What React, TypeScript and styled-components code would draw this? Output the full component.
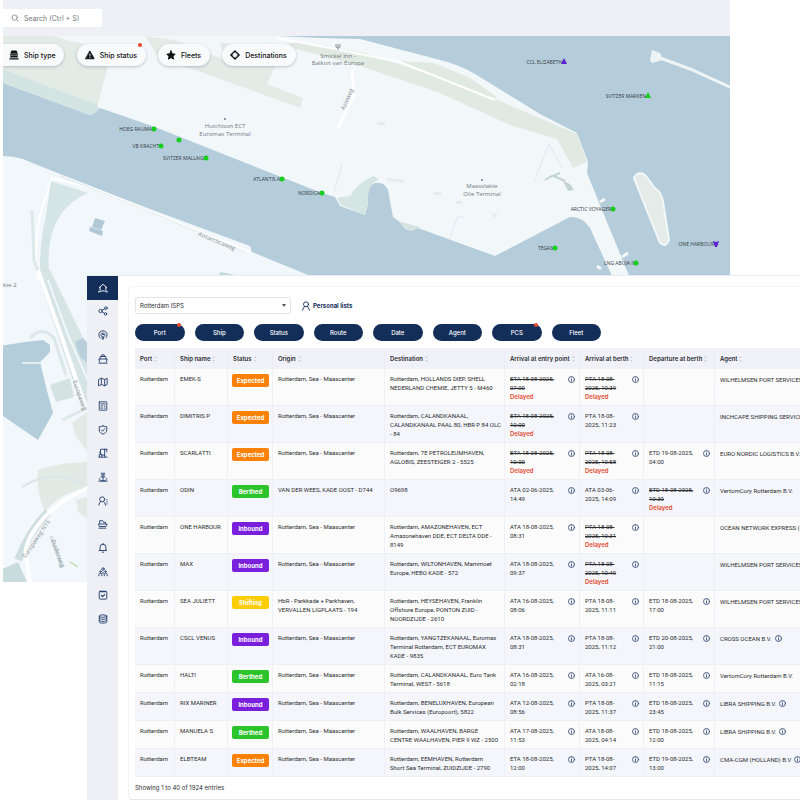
import React from "react";
import styled, { createGlobalStyle, css } from "styled-components";

const NAVY = "#132e59";

const GlobalStyle = createGlobalStyle`
  *, *::before, *::after { box-sizing: border-box; }
  body { margin: 0; background: #fff; font-family: Inter, "Open Sans", sans-serif; font-size: 6px; color: #2c2d30; }
  button, input, select { font: inherit; color: inherit; }
`;

const Page = styled.div`
  display: grid;
  grid-template-columns: minmax(0, 1fr);
  align-items: start;
  min-height: 100vh;
  overflow: hidden;
`;

/* ---------- map window ---------- */

const MapWindow = styled.section`
  grid-area: 1 / 1;
  margin: 0 70px 0 3px;
`;

const TopBar = styled.header`
  display: flex;
  align-items: center;
  height: 36px;
  background: #eef0f6;
`;

const SearchBox = styled.label`
  display: flex;
  align-items: center;
  gap: 5px;
  width: 99px;
  height: 18px;
  padding-left: 8px;
  background: #fff;
  border-radius: 0 2px 2px 0;
  color: #74767c;
`;

const SearchInput = styled.input`
  width: 75px;
  padding: 0;
  border: 0;
  outline: 0;
  background: none;
  font-size: 7px;
  &::placeholder { color: #74767c; opacity: 1; }
`;

const MapBody = styled.div`
  display: grid;
  grid-template-columns: minmax(0, 1fr);
  height: 546px;
  overflow: hidden;
`;

const MapDrawing = styled.svg`
  grid-area: 1 / 1;
  width: 100%;
  height: 546px;
  display: block;
  font-family: "Open Sans", sans-serif;
`;

const ChipBar = styled.div`
  grid-area: 1 / 1;
  z-index: 1;
  align-self: start;
  display: flex;
  gap: 12px;
  padding-top: 8px;
`;

const Dot = styled.i`
  position: absolute;
  top: -1px;
  right: 4px;
  width: 4px;
  height: 4px;
  border-radius: 50%;
  background: #e8482c;
`;

const Chip = styled.button<{ $first?: boolean }>`
  position: relative;
  display: flex;
  align-items: center;
  gap: 5px;
  height: 22px;
  padding: 0 9px 0 8px;
  border: 0;
  border-radius: 11px;
  background: #f8fafc;
  box-shadow: 0 1px 3px rgba(60, 80, 110, 0.3);
  color: #111;
  font-size: 7px;
  font-weight: 500;
  white-space: nowrap;
  ${(p) => p.$first && css`padding: 0 8px 0 6px; margin-right: 1px; border-radius: 0 11px 11px 0;`}
`;

/* ---------- front window ---------- */

const Panel = styled.section`
  grid-area: 1 / 1;
  z-index: 2;
  display: grid;
  grid-template-columns: 31px minmax(0, 1fr);
  margin: 275px 0 0 87px;
  background: #fff;
  border-top: 1px solid #e9edf3;
`;

const SideNav = styled.nav`
  background: #eff0f6;
`;

const NavList = styled.div`
  display: grid;
  grid-auto-rows: 1fr;
  height: 355px;
`;

const NavLink = styled.a<{ $active?: boolean }>`
  display: grid;
  place-items: center;
  background: ${(p) => (p.$active ? NAVY : "transparent")};
  color: ${(p) => (p.$active ? "#fff" : "#24406c")};
`;

const Icon = styled.svg<{ $size?: number }>`
  width: ${(p) => p.$size ?? 10}px;
  height: ${(p) => p.$size ?? 10}px;
  flex: none;
  fill: none;
  stroke: currentColor;
  stroke-width: 2.2;
  stroke-linecap: round;
  stroke-linejoin: round;
`;

const Card = styled.main`
  margin: 10px 0 1px 10px;
  padding: 10px 0 7px 6px;
  border: 1px solid #f4f4f7;
  border-bottom-color: #e6e7ea;
  border-right: 0;
  border-radius: 4px 0 0 4px;
`;

const ListRow = styled.div`
  display: flex;
  align-items: center;
  gap: 10px;
`;

const SelectWrap = styled.label`
  display: grid;
  align-items: center;
  width: 156px;
`;

const PortSelect = styled.select`
  grid-area: 1 / 1;
  height: 17px;
  padding: 0 4px;
  border: 1px solid #e4e5ea;
  border-radius: 2px;
  background: #fff;
  appearance: none;
`;

const Caret = styled.svg`
  grid-area: 1 / 1;
  justify-self: end;
  margin-right: 5px;
  width: 4px;
  height: 3px;
  pointer-events: none;
`;

const PersonalLists = styled.button`
  display: flex;
  align-items: center;
  gap: 2px;
  padding: 0;
  border: 0;
  background: none;
  color: ${NAVY};
  font-weight: 700;
`;

const Filters = styled.div`
  display: grid;
  grid-template-columns: repeat(8, minmax(0, 1fr));
  gap: 10px;
  width: 466px;
  margin: 10px 0 7px;
`;

const FilterButton = styled.button`
  position: relative;
  height: 17px;
  padding: 0;
  border: 0;
  border-radius: 9px;
  background: ${NAVY};
  color: #fff;
  font-weight: 500;
`;

const Table = styled.table`
  width: 100%;
  min-width: 665px;
  table-layout: fixed;
  border-collapse: separate;
  border-spacing: 0;
  line-height: 9px;
`;

const Col = styled.col<{ $w?: number }>`
  width: ${(p) => (p.$w ? `${p.$w}px` : "auto")};
`;

const Th = styled.th`
  height: 21px;
  padding: 0 0 0 5px;
  background: #f1f2f9;
  border-right: 1px solid #eaecf3;
  text-align: left;
  font-weight: 600;
  white-space: nowrap;
  &:last-child { border-right: 0; }
`;

const Sort = styled.svg`
  width: 3px;
  height: 6px;
  margin-left: 2px;
  vertical-align: -1px;
`;

const Tr = styled.tr`
  background: #fbfbfb;
  &:nth-child(even) { background: #f4f6fb; }
`;

const Td = styled.td`
  padding: 5px 0 4px 5px;
  border-right: 1px solid #eef0f5;
  border-bottom: 1px solid #eef0f5;
  vertical-align: top;
  white-space: nowrap;
  font-family: Roboto, Inter, sans-serif;
  &:last-child { border-right: 0; }
`;

const BadgeCell = styled(Td)`
  padding-left: 4px;
`;

const AgentText = styled.span`
  display: flex;
  align-items: center;
  gap: 3px;
  padding-top: 1px;
`;

const AgentMark = styled.span`
  display: flex;
  color: #24406c;
`;

const tones = { Expected: "#fb8207", Berthed: "#2bc52b", Inbound: "#7a1fdc", Shifting: "#fdcd08" };
type Status = keyof typeof tones;

const Badge = styled.span<{ $tone: Status }>`
  display: grid;
  place-items: center;
  width: 37px;
  height: 13px;
  border-radius: 2px;
  background: ${(p) => tones[p.$tone]};
  color: #fff;
  font-family: Inter, sans-serif;
  font-weight: 700;
`;

const TimeWrap = styled.div`
  display: flex;
  justify-content: space-between;
  padding-right: 4px;
`;

const InfoButton = styled.button`
  display: flex;
  align-self: flex-start;
  margin-top: 2px;
  padding: 0;
  border: 0;
  background: none;
  color: #24406c;
`;

const Late = styled.strong`
  display: block;
  color: #e2492f;
  font-family: Inter, sans-serif;
  font-weight: 600;
`;

const Footer = styled.p`
  margin: 6px 0 0;
  line-height: 9px;
`;

/* ---------- data ---------- */

type Time = { lines: string[]; late?: boolean } | null;
type Row = {
  ship: string;
  status: Status;
  origin: string[];
  dest: string[];
  entry: Time;
  berth: Time;
  dep: Time;
  agent: string;
  info?: boolean;
};

const t = (a: string, b: string, late = false): Time => ({ lines: [a, b], late });
const SEA = ["Rotterdam, Sea - Maascenter"];

const rows: Row[] = [
  { ship: "EMEK-S", status: "Expected", origin: SEA, dest: ["Rotterdam, HOLLANDS DIEP, SHELL", "NEDERLAND CHEMIE, JETTY 5 - M460"], entry: t("ETA 18-08-2025,", "07:00", true), berth: t("PTA 18-08-", "2025, 10:39", true), dep: null, agent: "WILHELMSEN PORT SERVICES" },
  { ship: "DIMITRIS P", status: "Expected", origin: SEA, dest: ["Rotterdam, CALANDKANAAL,", "CALANDKANAAL PAAL 80, HBR P 84 OLC", "- 84"], entry: t("ETA 18-08-2025,", "10:00", true), berth: t("PTA 18-08-", "2025, 11:23"), dep: null, agent: "INCHCAPE SHIPPING SERVICE" },
  { ship: "SCARLATTI", status: "Expected", origin: SEA, dest: ["Rotterdam, 7E PETROLEUMHAVEN,", "AGLOBIS, ZEESTEIGER 2 - 5525"], entry: t("ETA 18-08-2025,", "10:00", true), berth: t("PTA 18-08-", "2025, 10:58", true), dep: t("ETD 19-08-2025,", "04:00"), agent: "EURO NORDIC LOGISTICS B.V." },
  { ship: "ODIN", status: "Berthed", origin: ["VAN DER WEES, KADE OOST - D744"], dest: ["O9698"], entry: t("ATA 02-06-2025,", "14:49"), berth: t("ATA 03-06-", "2025, 14:09"), dep: t("ETD 18-08-2025,", "10:30", true), agent: "VertomCory Rotterdam B.V." },
  { ship: "ONE HARBOUR", status: "Inbound", origin: SEA, dest: ["Rotterdam, AMAZONEHAVEN, ECT", "Amazonehaven DDE, ECT DELTA DDE -", "8149"], entry: t("ATA 18-08-2025,", "08:31"), berth: t("PTA 18-08-", "2025, 10:31", true), dep: null, agent: "OCEAN NETWORK EXPRESS (N" },
  { ship: "MAX", status: "Inbound", origin: SEA, dest: ["Rotterdam, WILTONHAVEN, Mammoet", "Europe, HEBO KADE - 572"], entry: t("ATA 18-08-2025,", "09:37"), berth: t("PTA 18-08-", "2025, 10:49", true), dep: null, agent: "WILHELMSEN PORT SERVICES" },
  { ship: "SEA JULIETT", status: "Shifting", origin: ["HbR - Parkkade + Parkhaven,", "VERVALLEN LIGPLAATS - 194"], dest: ["Rotterdam, HEYSEHAVEN, Franklin", "Offshore Europe, PONTON ZUID -", "NOORDZIJDE - 2610"], entry: t("ATA 16-08-2025,", "08:06"), berth: t("PTA 18-08-", "2025, 11:11"), dep: t("ETD 18-08-2025,", "17:00"), agent: "WILHELMSEN PORT SERVICES" },
  { ship: "CSCL VENUS", status: "Inbound", origin: SEA, dest: ["Rotterdam, YANGTZEKANAAL, Euromax", "Terminal Rotterdam, ECT EUROMAX", "KADE - 9835"], entry: t("ATA 18-08-2025,", "08:31"), berth: t("PTA 18-08-", "2025, 11:12"), dep: t("ETD 20-08-2025,", "21:00"), agent: "CROSS OCEAN B.V.", info: true },
  { ship: "HALTI", status: "Berthed", origin: SEA, dest: ["Rotterdam, CALANDKANAAL, Euro Tank", "Terminal, WEST - 5618"], entry: t("ATA 16-08-2025,", "02:18"), berth: t("ATA 16-08-", "2025, 03:21"), dep: t("ETD 18-08-2025,", "11:15"), agent: "VertomCory Rotterdam B.V." },
  { ship: "RIX MARINER", status: "Inbound", origin: SEA, dest: ["Rotterdam, BENELUXHAVEN, European", "Bulk Services (Europoort), 5822"], entry: t("ATA 12-08-2025,", "08:56"), berth: t("PTA 18-08-", "2025, 11:37"), dep: t("ETD 18-08-2025,", "23:45"), agent: "LIBRA SHIPPING B.V.", info: true },
  { ship: "MANUELA S", status: "Berthed", origin: SEA, dest: ["Rotterdam, WAALHAVEN, BARGE", "CENTRE WAALHAVEN, PIER 9 WZ - 2500"], entry: t("ATA 17-08-2025,", "11:53"), berth: t("ATA 18-08-", "2025, 04:14"), dep: t("ETD 18-08-2025,", "12:00"), agent: "LIBRA SHIPPING B.V.", info: true },
  { ship: "ELBTEAM", status: "Expected", origin: SEA, dest: ["Rotterdam, EEMHAVEN, Rotterdam", "Short Sea Terminal, ZUIDZIJDE - 2790"], entry: t("ETA 18-08-2025,", "12:00"), berth: t("PTA 18-08-", "2025, 14:07"), dep: t("ETD 19-08-2025,", "13:00"), agent: "CMA-CGM (HOLLAND) B.V", info: true },
];

const columns: [string, number?][] = [
  ["Port", 40], ["Ship name", 53], ["Status", 45], ["Origin", 112], ["Destination", 120],
  ["Arrival at entry point", 75], ["Arrival at berth", 64], ["Departure at berth", 71], ["Agent"],
];

const navIcons: [string, React.ReactNode][] = [
  ["Home", <><path d="M3 11 12 3l9 8M5 10v8M19 10v8M1 21h5l2-2h8l2 2h5" /></>],
  ["Network", <><circle cx="6" cy="12" r="4" /><circle cx="19" cy="5" r="3" /><circle cx="18" cy="19" r="3" /><path d="m10 10 6-3M10 14l5 3" /></>],
  ["Signals", <><path d="M5 19a10 10 0 1 1 14 0M8 15a5 5 0 1 1 8 0" /><circle cx="12" cy="11" r="1" /><path d="M11 16h2v6h-2z" /></>],
  ["Ships", <><path d="M4 19 2 12h20l-2 7M5 12V6h14v6M9 6V2h6v4M2 22h20" /></>],
  ["Map", <><path d="m2 6 6-3 8 3 6-3v15l-6 3-8-3-6 3zM8 3v15M16 6v15" /></>],
  ["Reports", <><rect x="3" y="2" width="18" height="20" rx="1" /><path d="M7 7h10M7 12h4M15 12h2M7 17h4M15 17h2" /></>],
  ["Security", <><path d="M12 2c3 2 6 2 9 2v8c0 5-4 8-9 10-5-2-9-5-9-10V4c3 0 6 0 9-2zM8 12l3 3 5-6" /></>],
  ["Crane", <><path d="M2 22h20M3 21v-6h6v6M6 15V3h15M6 8 3 11M16 3v18M21 3v6M9 17h7" /></>],
  ["Tower", <><path d="M8 3h8M8 7h8M12 7v13M7 12h10M3 16c2 5 4 5 9 5s7 0 9-5M2 22h20" /></>],
  ["Contacts", <><circle cx="10" cy="8" r="6" /><path d="M2 22c1-5 2-7 5-9M18 22c-1-5-2-7-5-9M21 9h1M21 14h1M21 19h1" /></>],
  ["Folders", <><path d="M4 11V4h7l2 4h5v3M2 12h20l-3 6H4zM2 22h17" /></>],
  ["Alerts", <><path d="M5 17V10a7 7 0 0 1 14 0v7l2 1H3zM10 22h4M12 1v2" /></>],
  ["Teams", <><circle cx="12" cy="5" r="3" /><circle cx="6" cy="11" r="2" /><circle cx="18" cy="11" r="2" /><path d="M9 21v-5c0-3 6-3 6 0v5M2 21v-3c0-2 2-4 4-3M22 21v-3c0-2-2-4-4-3" /></>],
  ["Tasks", <><rect x="3" y="3" width="18" height="19" rx="2" /><path d="M6 4h12M8 13l3 3 5-5" strokeWidth="3" /></>],
  ["Data", <><ellipse cx="12" cy="5" rx="9" ry="3" /><path d="M3 5v14c0 4 18 4 18 0V5M3 10c0 4 18 4 18 0M3 15c0 4 18 4 18 0" /></>],
];

type Vessel = { name: string; x: number; y: number; kind?: "up" | "down"; color?: string };
const vessels: Vessel[] = [
  { name: "HOEG RAUMA", x: 154, y: 129 },
  { name: "", x: 179, y: 140 },
  { name: "VB KRACHT", x: 161, y: 146 },
  { name: "SVITZER MALLAIG", x: 206, y: 158 },
  { name: "ATLANTIS A", x: 282, y: 179 },
  { name: "NORDICA", x: 322, y: 193 },
  { name: "CCL ELIZABETH", x: 564, y: 62, kind: "up", color: "#5b1fd0" },
  { name: "SVITZER MARKEN", x: 648, y: 96, kind: "up" },
  { name: "ARCTIC VOYAGER", x: 613, y: 209 },
  { name: "TEGAS", x: 555, y: 248 },
  { name: "LNG ABUJA II", x: 636, y: 263 },
  { name: "ONE HARBOUR", x: 716, y: 244, kind: "down", color: "#5b1fd0" },
];

const InfoMark = () => (
  <Icon $size={7} viewBox="0 0 14 14" aria-hidden="true">
    <circle cx="7" cy="7" r="6" strokeWidth="1.600" />
    <path d="M7 6v5M7 3v2" strokeWidth="1.600" strokeLinecap="butt" />
  </Icon>
);

const Lines = ({ items }: { items: string[] }) => (
  <>{items.map((l, i) => <React.Fragment key={i}>{i > 0 && <br />}{l}</React.Fragment>)}</>
);

const TimeCell = ({ time }: { time: Time }) => (
  <Td>
    {time && (
      <TimeWrap>
        <div>
          {time.late ? <s><Lines items={time.lines} /></s> : <Lines items={time.lines} />}
          {time.late && <Late>Delayed</Late>}
        </div>
        <InfoButton aria-label="Details"><InfoMark /></InfoButton>
      </TimeWrap>
    )}
  </Td>
);

const HarbourMap = () => (
  <MapDrawing viewBox="3 36 727 546" preserveAspectRatio="xMinYMin slice" role="img" aria-label="Harbour map">
    <rect x="0" y="30" width="800" height="560" fill="#b5cddb" />
    {/* north bank */}
    <path fill="#f2f7fa" d="M0 30H270L276 36 320 38 360 39 440 60Q460 65 475 74L540 114 577 133 588 162 587 173 600 205 630 278H613L590 228Q582 216 570 217L495 256 418 228Q405 234 401 223L393 217 388 190Q384 181 375 183 366 186 368 204L365 215 340 206 335 197 322 193 155 127 100 108 90 115 0 82Z" />
    <path fill="#e3ebe6" d="M0 30H40L65 40 112 50 97 108 90 114 0 70Z" />
    <path fill="#d3e4e3" d="M0 68 60 91 97 104 99 109Q94 116 88 114L0 82Z" />
    <path fill="#e4ebe7" d="M145 36 175 40 225 60 220 42 270 52 276 64 267 84 303 98 300 108 195 70 160 60Z" />
    <path fill="#e0e9e2" d="M258 40 276 45 300 42 366 53 440 78 500 101 577 134 587 162 573 168 557 139 510 125 440 93 360 66 300 50Z" />
    <path fill="#e0e9e2" d="M400 61 434 63 470 78 497 97 492 100 440 80Z" />
    <path fill="none" stroke="#fff" strokeWidth="2" d="M277 38 330 48 400 62 495 100" />
    <path fill="#d5e5e2" d="M337 198 350 196Q358 182 374 176L379 180Q367 182 368 204L365 215 341 205Z" />
    <path fill="#d5e4e1" d="M401 222 420 227 412 231Q404 231 401 222Z" />
    <g fill="none" stroke="#dfe9eb" strokeWidth="1">
      <path d="M534 182 549 144 562 168M449 240 458 216 464 218M334 192 342 164" />
      <path stroke="#fff" strokeWidth="3" d="M352 70 354 95 338 128" />
    </g>
    <path fill="none" stroke="#f2f7fa" strokeWidth="3" d="M600 202 605 199M622 257 628 253M597 266 601 269" />
    <path fill="none" stroke="#c4d5cf" strokeWidth="2" d="M545 180 550 177 560 173M554 176 565 181" />
    <path fill="#c4d5cf" d="M563 181 570 184 574 190 568 191Z" />
    <g fill="#e5ecee"><path d="M378 122h8l-2 3h-7zM386 178l18 2v3l-16-2zM434 192h7v3h-7zM456 201h6v3h-6zM490 212l8 3-3 3z" /></g>
    {/* breakwaters */}
    <path fill="none" stroke="#edf4f6" strokeWidth="3" d="M655 56 690 69 732 88" />
    <path fill="#edf4f6" d="M652 50 660 53 663 60 652 63 650 60Z" />
    <path fill="#e4ebe8" stroke="#f2f7f8" strokeWidth="2" d="M634 178Q638 170 645 175L655 188Q663 193 664 208L669 240Q666 248 660 243Z" />
    {/* south bank */}
    <path fill="#f1f7fa" d="M0 156Q18 156 30 162L55 172 150 209 250 246 252 252 320 280V590H0Z" />
    <path fill="none" stroke="#fff" strokeWidth="2" d="M38 280Q33 250 40 215L52 178 88 187 250 252" />
    <path fill="none" stroke="#dfe9e9" strokeWidth="1" d="M60 176 150 212 245 252" />
    <path fill="#d5e4e4" d="M51 181 88 193Q63 203 53 230 46 252 50 280H40Q39 245 46 215Z" />
    <path fill="none" stroke="#dde8ea" strokeWidth="3" d="M32 210 34 260 41 280" />
    <path fill="#b1c9d7" d="M95 218 105 221 101 230 92 227ZM90 227 103 231 102 236 89 231Z" />
    <path fill="#c3d7e0" d="M220 272 240 276H219Z" />
    <path fill="#d6e4e4" d="M36 270H50L90 352V412L82 408Z" />
    <path fill="none" stroke="#fff" strokeWidth="4" d="M38 270 62 338 87 411" />
    <path fill="none" stroke="#f1f7fa" strokeWidth="2" d="M48 280 68 335 90 385" />
    <path fill="none" stroke="#dce8e8" strokeWidth="3" d="M30 338Q42 325 54 338L66 375M62 420 87 408" />
    <path fill="#b4cddb" d="M0 346 25 342 43 340 50 345V352L40 362 47 391 53 413 38 440 0 414Z" />
    <path fill="none" stroke="#e3edf0" strokeWidth="2" d="M22 363H40" />
    <path fill="#b9d0dc" d="M75 342 83 338 90 345V365L80 357Z" />
    <path fill="#d4e3e2" d="M50 385 70 378 74 397 56 402Z" />
    <path fill="#e1eae5" d="M72 423 90 410V455L76 436ZM38 470Q60 462 90 462V487Q60 492 45 512Q36 492 38 470ZM76 500 90 496V520L78 512Z" />
    <path fill="none" stroke="#d9e5e8" strokeWidth="2" d="M22 487Q55 466 90 487" />
    <path fill="none" stroke="#cfdedf" strokeWidth="8" d="M48 512Q30 530 18 560" />
    <path fill="none" stroke="#fff" strokeWidth="4" d="M90 487Q55 502 38 525T27 560L30 584" />
    <path fill="#c8dcdd" d="M0 570 18 562 27 582H0Z" />
    <path fill="none" stroke="#d4e1e4" strokeWidth="3" d="M51 536 62 568" />
    <path fill="none" stroke="#cbe3c2" strokeWidth="2" d="M70 562 78 567" />
    {/* place names */}
    <g fontSize="6" fill="#717a82" textAnchor="middle">
      <text x="225" y="128">Hutchison ECT</text>
      <text x="225" y="136">Euromax Terminal</text>
      <text x="482" y="188">Maasvlakte</text>
      <text x="482" y="196">Olie Terminal</text>
      <text x="338" y="58">Smickel Inn -</text>
      <text x="338" y="65">Balkon van Europa</text>
      <text x="3" y="287" textAnchor="start">kte 2</text>
      <text fill="#8a9499" transform="translate(216 243) rotate(22)">Antarcticaweg</text>
      <text fill="#8a9499" transform="translate(349 100) rotate(-66)">Azieweg</text>
      <text fill="#8a9499" transform="translate(38 540) rotate(-56)">Europaweg N15</text>
      <text fill="#8a9499" transform="translate(78 396) rotate(70)">Europaweg</text>
      <text fill="#8a9499" transform="translate(56 554) rotate(70)">Zuiderweg</text>
    </g>
    <circle cx="225" cy="119" r="1" fill="#717a82" />
    <circle cx="482" cy="180" r="1" fill="#717a82" />
    <path fill="none" stroke="#8b9398" d="M336 44v3q2 2 4 0v-3M338 44v6" />
    {/* vessels */}
    {vessels.map((v, i) => (
      <g key={i} fill={v.color ?? "#16ce1c"}>
        {v.kind === "up" && <path d={`M${v.x} ${v.y - 4}l3 6h-6z`} />}
        {v.kind === "down" && <path d={`M${v.x - 3} ${v.y - 3}l3 1 3-1-2 6h-2z`} />}
        {!v.kind && <circle cx={v.x} cy={v.y} r="2.500" />}
        <text x={v.x - 2} y={v.y + 2} fontSize="5" textAnchor="end" fill="#333b44">{v.name}</text>
      </g>
    ))}
  </MapDrawing>
);

export default function App() {
  return (
    <Page>
      <GlobalStyle />
      <MapWindow>
        <TopBar>
          <SearchBox>
            <Icon $size={8} viewBox="0 0 24 24" aria-hidden="true"><circle cx="11" cy="11" r="8" /><path d="m17 17 5 5" /></Icon>
            <SearchInput type="search" aria-label="Search" placeholder="Search (Ctrl + S)" />
          </SearchBox>
        </TopBar>
        <MapBody>
          <HarbourMap />
          <ChipBar>
            <Chip $first>
              <Icon $size={10} viewBox="0 0 24 24" aria-hidden="true"><path fill="currentColor" stroke="none" d="M6 1h12l3 7v10H3V8zM1 20h22v3H1z" /><path stroke="#fff" strokeWidth="1" d="M3 9h18M3 13h18" /></Icon>
              Ship type
            </Chip>
            <Chip>
              <Icon $size={10} viewBox="0 0 24 24" aria-hidden="true"><path fill="currentColor" d="M12 3 22 21H2z" /><path stroke="#fff" d="M12 10v4M12 17v1" /></Icon>
              Ship status
              <Dot />
            </Chip>
            <Chip>
              <Icon $size={10} viewBox="0 0 24 24" aria-hidden="true"><path fill="currentColor" d="m12 2 3 7 7 1-5 5 1 7-6-4-6 4 1-7-5-5 7-1z" /></Icon>
              Fleets
            </Chip>
            <Chip>
              <Icon $size={10} viewBox="0 0 24 24" aria-hidden="true"><path strokeWidth="3" d="m12 2 10 10-10 10L2 12z" /><path strokeWidth="2" d="M12 3v4M12 17v4M3 12h4M17 12h4" /></Icon>
              Destinations
            </Chip>
          </ChipBar>
        </MapBody>
      </MapWindow>

      <Panel>
        <SideNav aria-label="Main">
          <NavList>
            {navIcons.map(([name, drawing], i) => (
              <NavLink key={name} href="#" aria-label={name} $active={i === 0}>
                <Icon viewBox="0 0 24 24" aria-hidden="true">{drawing}</Icon>
              </NavLink>
            ))}
          </NavList>
        </SideNav>
        <Card>
          <ListRow>
            <SelectWrap>
              <PortSelect aria-label="List"><option>Rotterdam ISPS</option></PortSelect>
              <Caret viewBox="0 0 4 3" aria-hidden="true"><path d="M0 0h4L2 3z" fill="#555" /></Caret>
            </SelectWrap>
            <PersonalLists>
              <Icon viewBox="0 0 24 24" aria-hidden="true"><circle cx="12" cy="8" r="6" /><path d="M4 22c1-5 2-7 5-9M20 22c-1-5-2-7-5-9" /></Icon>
              Personal lists
            </PersonalLists>
          </ListRow>
          <Filters>
            {["Port", "Ship", "Status", "Route", "Date", "Agent", "PCS", "Fleet"].map((f) => (
              <FilterButton key={f}>{f}{(f === "Port" || f === "PCS") && <Dot />}</FilterButton>
            ))}
          </Filters>
          <Table>
            <colgroup>{columns.map(([name, w]) => <Col key={name} $w={w} />)}</colgroup>
            <thead>
              <tr>
                {columns.map(([name]) => (
                  <Th key={name} scope="col">
                    {name}
                    <Sort viewBox="0 0 3 6" aria-hidden="true"><path d="M0 2 1.500 0 3 2zM0 4l1.500 2L3 4z" fill="#cfd1da" /></Sort>
                  </Th>
                ))}
              </tr>
            </thead>
            <tbody>
              {rows.map((r) => (
                <Tr key={r.ship}>
                  <Td>Rotterdam</Td>
                  <Td>{r.ship}</Td>
                  <BadgeCell><Badge $tone={r.status}>{r.status}</Badge></BadgeCell>
                  <Td><Lines items={r.origin} /></Td>
                  <Td><Lines items={r.dest} /></Td>
                  <TimeCell time={r.entry} />
                  <TimeCell time={r.berth} />
                  <TimeCell time={r.dep} />
                  <Td><AgentText>{r.agent}{r.info && <AgentMark><InfoMark /></AgentMark>}</AgentText></Td>
                </Tr>
              ))}
            </tbody>
          </Table>
          <Footer>Showing 1 to 40 of 1924 entries</Footer>
        </Card>
      </Panel>
    </Page>
  );
}
